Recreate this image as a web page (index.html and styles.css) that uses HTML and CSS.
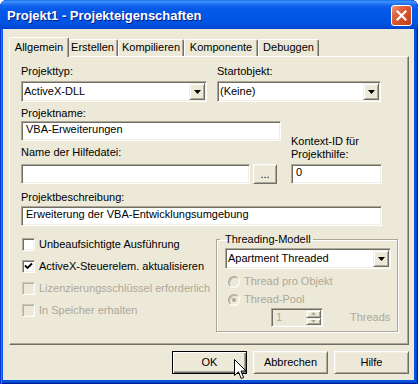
FILE: index.html
```html
<!DOCTYPE html>
<html lang="de">
<head>
<meta charset="utf-8">
<title>Projekt1 - Projekteigenschaften</title>
<link rel="stylesheet" href="styles.css">
</head>
<body>
<div class="window">
  <div class="titlebar">
    <span class="title">Projekt1 - Projekteigenschaften</span>
    <div class="close">
      <svg width="11" height="11" viewBox="0 0 11 11"><path d="M1.5 1.5 L9.5 9.5 M9.5 1.5 L1.5 9.5" stroke="#fff" stroke-width="2.2" stroke-linecap="square"/></svg>
    </div>
  </div>
  <div class="client">
    <div class="tabs">
      <div class="tab t-allg active">Allgemein</div>
      <div class="tab t-erst">Erstellen</div>
      <div class="tab t-komp">Kompilieren</div>
      <div class="tab t-kpon">Komponente</div>
      <div class="tab t-debug">Debuggen</div>
    </div>
    <div class="panel">
      <div class="row row1">
        <div class="field f-typ">
          <span class="lbl">Projekttyp:</span>
          <div class="combo">
            <span class="combo-text">ActiveX-DLL</span>
            <span class="drop"><svg width="7" height="4" viewBox="0 0 7 4"><path d="M0 0 H7 L3.5 4 Z" fill="#000"/></svg></span>
          </div>
        </div>
        <div class="field f-start">
          <span class="lbl">Startobjekt:</span>
          <div class="combo">
            <span class="combo-text">(Keine)</span>
            <span class="drop"><svg width="7" height="4" viewBox="0 0 7 4"><path d="M0 0 H7 L3.5 4 Z" fill="#000"/></svg></span>
          </div>
        </div>
      </div>
      <div class="row row2">
        <div class="col-left">
          <span class="lbl">Projektname:</span>
          <div class="textbox w-name">VBA-Erweiterungen</div>
          <span class="lbl lbl-help">Name der Hilfedatei:</span>
          <div class="file-row">
            <div class="textbox w-file"></div>
            <div class="btn btn-small">...</div>
          </div>
        </div>
        <div class="col-right">
          <span class="lbl">Kontext-ID für<br>Projekthilfe:</span>
          <div class="textbox w-ctx">0</div>
        </div>
      </div>
      <span class="lbl lbl-desc">Projektbeschreibung:</span>
      <div class="textbox w-desc">Erweiterung der VBA-Entwicklungsumgebung</div>
      <div class="row row5">
        <div class="checks">
          <div class="check"><span class="box"></span>Unbeaufsichtigte Ausführung</div>
          <div class="check"><span class="box"><svg width="9" height="9" viewBox="0 0 9 9"><path d="M1 3.5 L3.5 6 L8 1.5" stroke="#000" stroke-width="1.8" fill="none"/></svg></span>ActiveX-Steuerelem. aktualisieren</div>
          <div class="check disabled"><span class="box"></span>Lizenzierungsschlüssel erforderlich</div>
          <div class="check disabled"><span class="box"></span>In Speicher erhalten</div>
        </div>
        <fieldset class="group">
          <legend>Threading-Modell</legend>
          <div class="combo">
            <span class="combo-text">Apartment Threaded</span>
            <span class="drop"><svg width="7" height="4" viewBox="0 0 7 4"><path d="M0 0 H7 L3.5 4 Z" fill="#000"/></svg></span>
          </div>
          <div class="radio r1"><span class="circle"></span>Thread pro Objekt</div>
          <div class="radio r2"><span class="circle"><span class="dot"></span></span>Thread-Pool</div>
          <div class="spin-row">
            <div class="spin">
              <span class="spin-text">1</span>
              <span class="spin-btns">
                <span class="spin-btn"><svg width="5" height="3" viewBox="0 0 5 3"><path d="M2.5 0 L5 3 H0 Z" fill="#ACA899"/></svg></span>
                <span class="spin-btn"><svg width="5" height="3" viewBox="0 0 5 3"><path d="M0 0 H5 L2.5 3 Z" fill="#ACA899"/></svg></span>
              </span>
            </div>
            <span class="threads">Threads</span>
          </div>
        </fieldset>
      </div>
    </div>
    <div class="buttons">
      <div class="btn btn-default">OK</div>
      <div class="btn">Abbrechen</div>
      <div class="btn">Hilfe</div>
    </div>
  </div>
  <svg class="cursor" width="13" height="21" viewBox="0 0 13 21"><path d="M0.5 0.5 L0.5 16.5 L4.5 12.8 L7.2 19.5 L9.6 18.5 L7 12 L12 12 Z" fill="#fff" stroke="#000" stroke-width="1" stroke-linejoin="miter"/></svg>
</div>
</body>
</html>
```

FILE: styles.css
```css
* { box-sizing: border-box; margin: 0; padding: 0; }
html, body { width: 418px; height: 384px; overflow: hidden; background: #ffffff; }
body { font-family: "Liberation Sans", Arial, sans-serif; font-size: 11px; color: #000; }

.window {
  position: relative;
  width: 418px;
  height: 384px;
  border-radius: 7px 7px 0 0;
  overflow: hidden;
  background: #0855DD;
  display: flex;
  flex-direction: column;
  box-shadow: inset 1px 0 #0831D9, inset 2px 0 #2A7BF4, inset -1px 0 #001C9E, inset -2px 0 #0843C8, inset 0 -1px #001C9E, inset 0 -2px #0843C8;
}

.titlebar {
  flex: none;
  height: 29px;
  display: flex;
  align-items: center;
  justify-content: space-between;
  padding: 2px 6px 0 7px;
  border-radius: 7px 7px 0 0;
  background: linear-gradient(to bottom, #0A5AE4 0px, #3D95FF 1px, #3283F6 3px, #1468EE 5px, #0759E7 9px, #0156E5 18px, #0052E0 24px, #004AD6 27px, #0043CA 29px);
}
.title {
  color: #fff;
  font-weight: bold;
  font-size: 13px;
  line-height: 15px;
  text-shadow: 1px 1px #0A1B88;
  white-space: nowrap;
}
.close {
  width: 21px;
  height: 21px;
  border: 1px solid #fff;
  border-radius: 3px;
  background: linear-gradient(135deg, #F29A78 0%, #E2643C 30%, #D24D24 65%, #BC3C16 100%);
  display: flex;
  align-items: center;
  justify-content: center;
}

.client {
  flex: 1;
  margin: 0 4px 4px 3px;
  background: #ECE9D8;
  display: flex;
  flex-direction: column;
  padding: 8px 5px 0 6px;
}

.tabs {
  display: flex;
  align-items: flex-end;
  height: 19px;
  margin-left: 2px;
  position: relative;
  z-index: 1;
}
.tab {
  height: 17px;
  padding-top: 1px;
  line-height: 13px;
  text-align: center;
  white-space: nowrap;
  background: #ECE9D8;
  border: 1px solid;
  border-bottom: none;
  border-color: #fff #716F64 transparent #fff;
  border-radius: 2px 2px 0 0;
  box-shadow: inset -1px 0 #ACA899;
}
.t-allg { width: 56px; }
.t-erst { width: 51px; }
.t-komp { width: 66px; }
.t-kpon { width: 74px; }
.t-debug { width: 61px; }
.tab.active {
  position: relative;
  z-index: 2;
  width: 60px;
  height: 20px;
  padding-top: 3px;
  margin: 0 -2px -1px;
}

.panel {
  height: 289px;
  border: 1px solid;
  border-color: #fff #716F64 #716F64 #fff;
  box-shadow: inset -1px -1px #ACA899;
  padding: 8px 0 0 11px;
}

.row { display: flex; }
.lbl { display: block; line-height: 13px; white-space: nowrap; }

.f-typ { width: 186px; }
.f-start { width: 164px; margin-left: 10px; }

.combo {
  display: flex;
  height: 21px;
  margin-top: 3px;
  padding: 1px;
  background: #fff;
  border: 1px solid;
  border-color: #ACA899 #fff #fff #ACA899;
  box-shadow: inset 1px 1px #716F64, inset -1px -1px #F1EFE2;
}
.combo-text {
  flex: 1;
  padding: 2px 0 0 1px;
  line-height: 13px;
  white-space: nowrap;
  overflow: hidden;
}
.drop {
  flex: none;
  width: 16px;
  height: 17px;
  background: #ECE9D8;
  border: 1px solid;
  border-color: #F1EFE2 #716F64 #716F64 #F1EFE2;
  box-shadow: inset 1px 1px #fff, inset -1px -1px #ACA899;
  display: flex;
  align-items: center;
  justify-content: center;
}

.textbox {
  height: 20px;
  background: #fff;
  border: 1px solid;
  border-color: #ACA899 #fff #fff #ACA899;
  box-shadow: inset 1px 1px #716F64, inset -1px -1px #F1EFE2;
  padding: 1px 0 0 4px;
  line-height: 13px;
  white-space: nowrap;
  overflow: hidden;
}

.row2 { margin-top: 5px; }
.col-left { width: 261px; }
.w-name { width: 260px; margin-top: 1px; }
.lbl-help { margin-top: 5px; }
.file-row { display: flex; margin-top: 5px; }
.w-file { width: 229px; }
.col-right { margin-left: 9px; padding-top: 28px; }
.w-ctx { width: 91px; margin-top: 3px; }
.lbl-desc { margin-top: 7px; }
.w-desc { width: 361px; margin-top: 2px; }

.btn {
  width: 75px;
  height: 23px;
  background: #ECE9D8;
  border: 1px solid;
  border-color: #fff #716F64 #716F64 #fff;
  box-shadow: inset 1px 1px #F1EFE2, inset -1px -1px #ACA899;
  display: flex;
  align-items: center;
  justify-content: center;
  line-height: 13px;
  white-space: nowrap;
}
.btn-small {
  width: 24px;
  height: 20px;
  margin-left: 3px;
  padding-top: 1px;
}
.btn-default {
  border: 1px solid #000;
  box-shadow: inset 1px 1px #fff, inset -1px -1px #716F64, inset -2px -2px #ACA899;
}

.row5 { margin-top: 7px; }
.checks {
  width: 194px;
  margin-left: 1px;
  padding-top: 5px;
  display: flex;
  flex-direction: column;
  gap: 9px;
}
.check {
  display: flex;
  align-items: center;
  gap: 4px;
  height: 13px;
  line-height: 13px;
  white-space: nowrap;
}
.box {
  flex: none;
  width: 13px;
  height: 13px;
  background: #fff;
  border: 1px solid;
  border-color: #ACA899 #fff #fff #ACA899;
  box-shadow: inset 1px 1px #716F64, inset -1px -1px #F1EFE2;
  display: flex;
  align-items: center;
  justify-content: center;
}
.check.disabled { color: #ACA899; }
.check.disabled .box {
  background: #ECE9D8;
  border-color: #CAC7B9 #fff #fff #CAC7B9;
  box-shadow: inset 1px 1px #B4B1A3, inset -1px -1px #F1EFE2;
}

.group {
  width: 182px;
  min-inline-size: 0;
  border: 1px solid #ACA899;
  box-shadow: inset 1px 1px #fff, 1px 1px #fff;
  padding: 2px 6px 4px 8px;
}
.group legend {
  margin-left: -5px;
  padding: 0 2px 0 5px;
  line-height: 13px;
  white-space: nowrap;
}
.group .combo { margin-top: 0; width: 166px; }

.radio {
  display: flex;
  align-items: center;
  gap: 4px;
  height: 13px;
  line-height: 13px;
  margin-left: 3px;
  color: #ACA899;
  white-space: nowrap;
}
.r1 { margin-top: 6px; }
.r2 { margin-top: 5px; }
.circle {
  flex: none;
  width: 12px;
  height: 12px;
  border-radius: 50%;
  background: #ECE9D8;
  border: 1px solid;
  border-color: #ACA899 #fff #fff #ACA899;
  box-shadow: inset 1px 1px #B9B6A8, inset -1px -1px #F1EFE2;
  display: flex;
  align-items: center;
  justify-content: center;
}
.dot { width: 4px; height: 4px; border-radius: 50%; background: #ACA899; }

.spin-row { display: flex; align-items: center; margin-top: 2px; }
.spin {
  display: flex;
  width: 52px;
  height: 19px;
  margin-left: 46px;
  padding: 1px;
  background: #ECE9D8;
  border: 1px solid;
  border-color: #ACA899 #fff #fff #ACA899;
  box-shadow: inset 1px 1px #716F64, inset -1px -1px #F1EFE2;
}
.spin-text { flex: 1; padding: 1px 0 0 3px; line-height: 13px; color: #ACA899; }
.spin-btns { display: flex; flex-direction: column; width: 15px; }
.spin-btn {
  flex: 1;
  background: #ECE9D8;
  border: 1px solid;
  border-color: #F1EFE2 #716F64 #716F64 #F1EFE2;
  box-shadow: inset 1px 1px #fff, inset -1px -1px #ACA899;
  display: flex;
  align-items: center;
  justify-content: center;
}
.threads { margin-left: 27px; color: #ACA899; line-height: 13px; }

.buttons {
  display: flex;
  justify-content: flex-end;
  gap: 6px;
  margin-top: 6px;
}

.cursor { position: absolute; left: 234px; top: 359px; }
```
